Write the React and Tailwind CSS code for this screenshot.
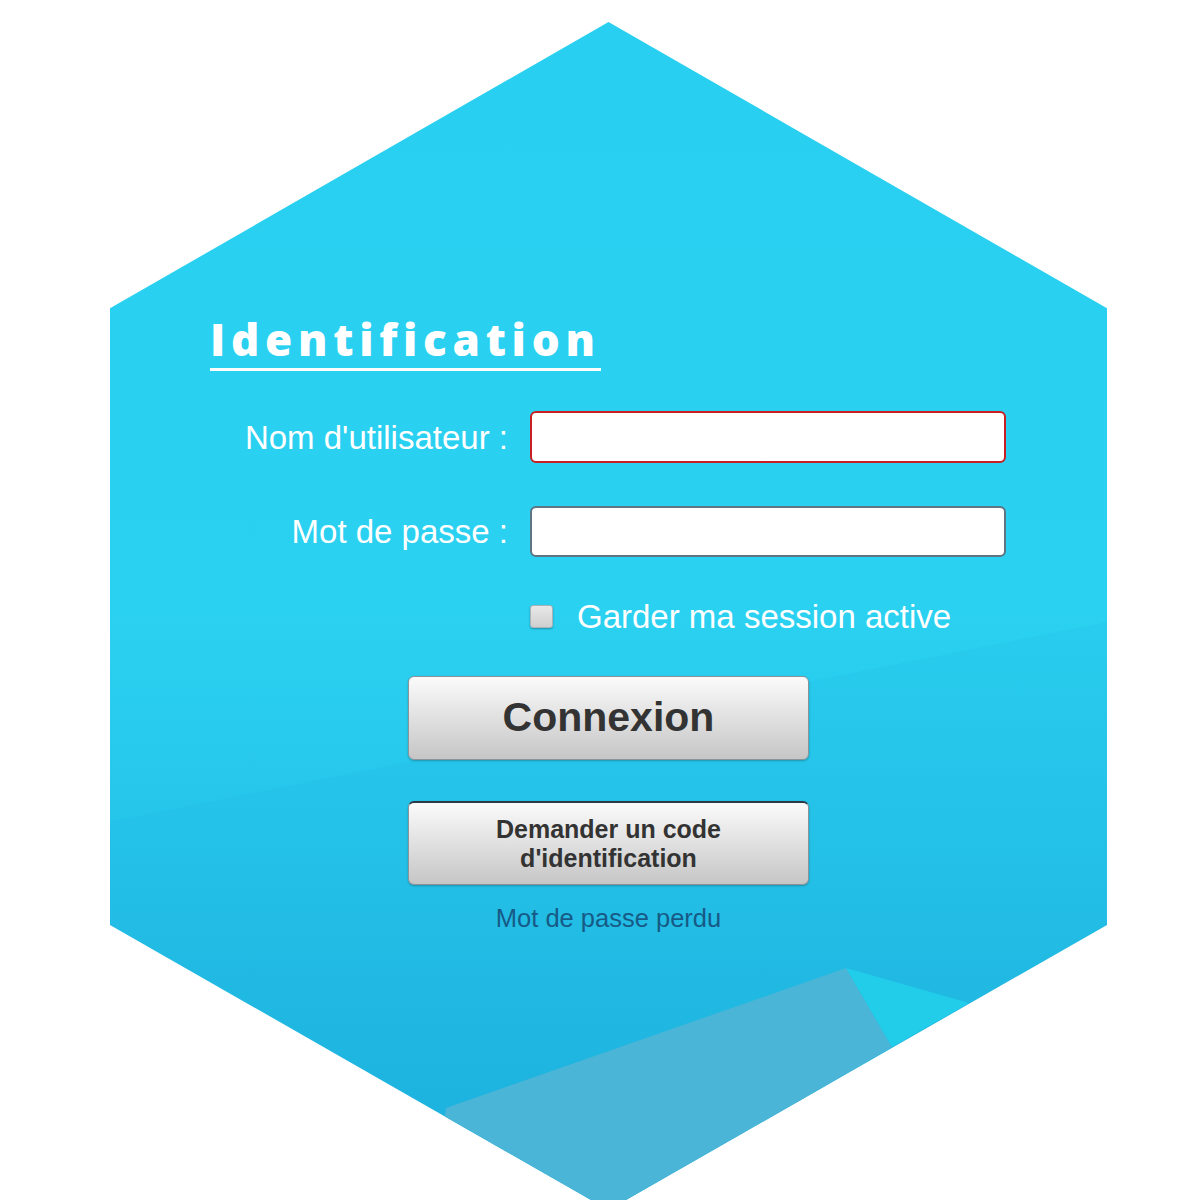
import { useState } from 'react';

const HexDecor = () => (
  <svg className="absolute inset-0 pointer-events-none" width="997" height="1188" viewBox="0 0 997 1188">
    <polygon points="0,800 997,600 997,1188 0,1188" fill="#1aa8d8" opacity="0.1" />
    <polygon points="336,1086 736,946 782,1025 505,1188 320,1188" fill="#4ab5d6" />
    <polygon points="736,946 859,981 782,1025" fill="#22cdea" />
  </svg>
);

const App = () => {
  const [keepSession, setKeepSession] = useState(false);

  return (
    <div className="min-h-[1200px] bg-white pt-[22px] pl-[110px] overflow-hidden" style={{ fontFamily: '"Liberation Sans", Arial, sans-serif' }}>
      <div className="relative w-[997px] h-[1188px] bg-linear-to-b from-[#29cff0] via-[#2bd1f1] to-[#1cafdd] [clip-path:polygon(50%_0,100%_24.1%,100%_76%,50%_100%,0_76%,0_24.1%)]">
        <HexDecor />

        <div className="relative pt-[290px]">
          {/* Title */}
          <div className="ml-[100px] inline-block border-b-[3px] border-white pb-[2px]">
            <h1 className="text-white text-[44px] leading-[54px] font-extrabold tracking-[0.13em]" style={{ fontFamily: '"Open Sans", Lato, sans-serif' }}>
              Identification
            </h1>
          </div>

          {/* Fields */}
          <div className="mt-[40px] grid grid-cols-[398px_476px] gap-x-[22px] gap-y-[43px] items-center">
            <label className="text-right text-white text-[33px] leading-none">Nom d'utilisateur :</label>
            <input type="text" className="h-[52px] rounded-[6px] border-2 border-[#c81e24] bg-white px-2 outline-none" />
            <label className="text-right text-white text-[33px] leading-none">Mot de passe :</label>
            <input type="password" className="h-[51px] rounded-[6px] border-2 border-[#5d7483] bg-white px-2 outline-none" />
          </div>

          <div className="mt-[43px] ml-[420px] flex items-center gap-[24px]">
            <button
              onClick={() => setKeepSession(!keepSession)}
              className="w-[23px] h-[23px] rounded-[3px] bg-linear-to-b from-[#e8e8e8] to-[#cfcfcf] border border-[#a9b3b8] shadow-[0_1px_2px_rgba(0,0,0,0.3)]"
            />
            <span className="text-white text-[33px] leading-none">Garder ma session active</span>
          </div>

          {/* Buttons */}
          <div className="mt-[43px] flex flex-col items-center">
            <button className="w-[401px] h-[84px] rounded-[6px] border border-[#8a9499] bg-linear-to-b from-[#fbfbfb] to-[#c6c6c6] text-[#333] text-[41px] font-bold shadow-[0_1px_2px_rgba(0,0,0,0.25)]">
              Connexion
            </button>
            <button className="mt-[41px] w-[401px] h-[84px] rounded-[6px] border border-[#8a9499] border-t-2 border-t-[#2b3a44] bg-linear-to-b from-[#fbfbfb] to-[#c6c6c6] text-[#333] text-[25px] font-bold leading-[29px] shadow-[0_1px_2px_rgba(0,0,0,0.25)]">
              Demander un code<br />d'identification
            </button>
            <a href="#" className="mt-[14px] text-[25.5px] text-[#175a86]">Mot de passe perdu</a>
          </div>
        </div>
      </div>
    </div>
  );
};

export default App;
